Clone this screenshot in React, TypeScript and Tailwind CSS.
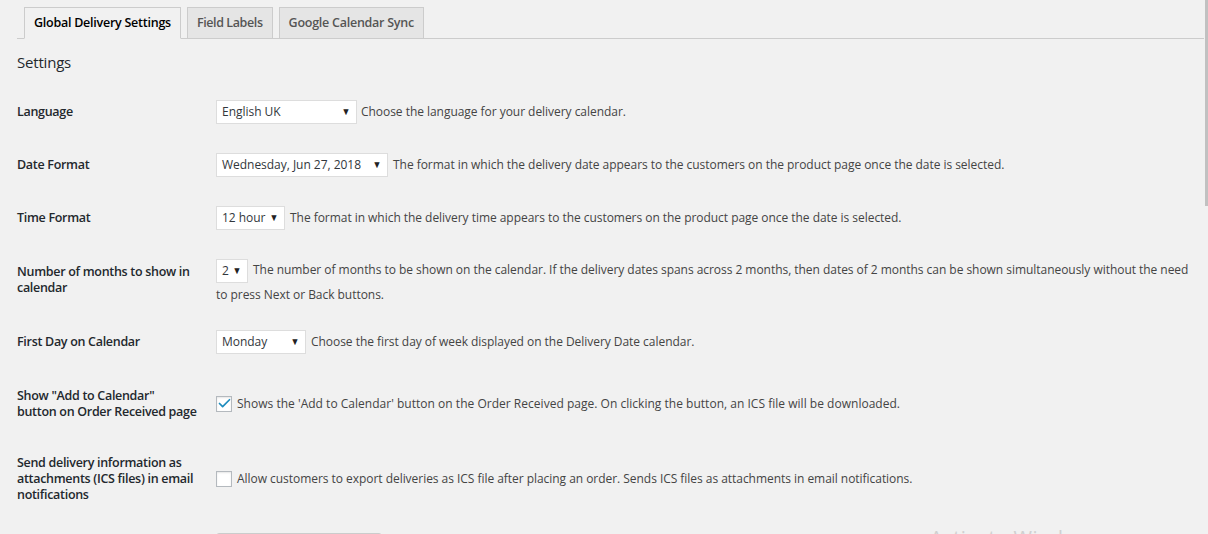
import { Check } from 'lucide-react';

const font = { fontFamily: '"Open Sans", "Noto Sans", sans-serif' };

function Select({ value, width }: { value: string; width: string }) {
	return (
		<div
			className={`relative flex items-center h-6 bg-white border border-[#ddd] pl-[5px] text-[12px] tracking-[-0.03px] text-[#32373c] shrink-0 ${width}`}
		>
			<span>{value}</span>
			<span className="absolute right-[5px] top-[5px] text-[10px] leading-none text-[#222] scale-x-90">▼</span>
		</div>
	);
}

function Checkbox({ checked }: { checked?: boolean }) {
	return (
		<div className="relative w-4 h-4 bg-white border border-[#b4b9be] shrink-0 shadow-[inset_0_1px_2px_rgba(0,0,0,0.1)]">
			{checked && (
				<Check className="absolute left-0 -top-[1px] w-[15px] h-[15px] text-[#1e8cbe]" strokeWidth={2.75} />
			)}
		</div>
	);
}

function Row({ label, height, children }: { label: React.ReactNode; height: string; children: React.ReactNode }) {
	return (
		<div className={`flex items-center ${height}`}>
			<div className="w-[199px] shrink-0 pr-[8px] text-[12.5px] font-semibold leading-[16px] text-[#23282d] tracking-[-0.3px]">
				{label}
			</div>
			<div className="flex-1 pr-[10px] text-[12px] text-[#444] tracking-[-0.04px] leading-[24px]">{children}</div>
		</div>
	);
}

export default function App() {
	return (
		<div className="relative h-[534px] overflow-hidden bg-[#f1f1f1]" style={font}>
			<div className="absolute right-0 top-0 w-[3px] h-[206px] bg-[#c1c1c1]" />
			<div className="pl-[17px] pr-[4px]">
				<div className="flex gap-[6px] pl-[7px] pt-[7px] border-b border-[#ccc]">
					<div className="-mb-px h-[32px] px-[9px] flex items-center border border-[#ccc] border-b-[#f1f1f1] bg-[#f1f1f1] text-[12.5px] font-semibold text-[#000] tracking-[-0.25px]">
						Global Delivery Settings
					</div>
					<div className="h-[31px] px-[9px] flex items-center border border-b-0 border-[#ccc] bg-[#e5e5e5] text-[12.5px] font-semibold text-[#555] tracking-[-0.4px]">
						Field Labels
					</div>
					<div className="h-[31px] px-[9px] flex items-center border border-b-0 border-[#ccc] bg-[#e5e5e5] text-[12.5px] font-semibold text-[#555] tracking-[-0.25px]">
						Google Calendar Sync
					</div>
				</div>

				<div className="h-[46px] flex items-center pt-[1px] text-[15px] text-[#23282d] tracking-[-0.2px]">Settings</div>

				<Row label="Language" height="h-[53px]">
					<div className="flex items-center gap-[4px]">
						<Select value="English UK" width="w-[141px]" />
						<span>Choose the language for your delivery calendar.</span>
					</div>
				</Row>
				<Row label="Date Format" height="h-[53px]">
					<div className="flex items-center gap-[5px]">
						<Select value="Wednesday, Jun 27, 2018" width="w-[172px]" />
						<span>The format in which the delivery date appears to the customers on the product page once the date is selected.</span>
					</div>
				</Row>
				<Row label="Time Format" height="h-[53px]">
					<div className="flex items-center gap-[5px]">
						<Select value="12 hour" width="w-[69px]" />
						<span>The format in which the delivery time appears to the customers on the product page once the date is selected.</span>
					</div>
				</Row>
				<Row
					label={
						<>
							Number of months to show in
							<br />
							calendar
						</>
					}
					height="h-[71px]"
				>
					<div className="pt-[6px]">
						<span className="inline-flex align-middle mr-[5px]">
							<Select value="2" width="w-[32px]" />
						</span>
						The number of months to be shown on the calendar. If the delivery dates spans across 2 months, then dates of 2 months can be shown simultaneously without the need
						<br />
						to press Next or Back buttons.
					</div>
				</Row>
				<Row label="First Day on Calendar" height="h-[53px]">
					<div className="flex items-center gap-[5px]">
						<Select value="Monday" width="w-[90px]" />
						<span>Choose the first day of week displayed on the Delivery Date calendar.</span>
					</div>
				</Row>
				<Row
					label={
						<>
							Show "Add to Calendar"
							<br />
							button on Order Received page
						</>
					}
					height="h-[71px]"
				>
					<div className="flex items-center gap-[5px]">
						<Checkbox checked />
						<span className="tracking-[0.02px]">Shows the 'Add to Calendar' button on the Order Received page. On clicking the button, an ICS file will be downloaded.</span>
					</div>
				</Row>
				<Row
					label={
						<>
							Send delivery information as
							<br />
							attachments (ICS files) in email
							<br />
							notifications
						</>
					}
					height="h-[79px]"
				>
					<div className="flex items-center gap-[5px]">
						<Checkbox />
						<span>Allow customers to export deliveries as ICS file after placing an order. Sends ICS files as attachments in email notifications.</span>
					</div>
				</Row>

				<div className="flex pt-[15px]">
					<div className="w-[199px] shrink-0" />
					<div className="w-[166px] h-[30px] rounded-[3px] border border-[#ccc] bg-[#f7f7f7]" />
				</div>
			</div>
			<div className="absolute left-[930px] top-[526px] text-[20px] leading-[24px] text-[#d0d0d0] tracking-wide">Activate Windows</div>
		</div>
	);
}
